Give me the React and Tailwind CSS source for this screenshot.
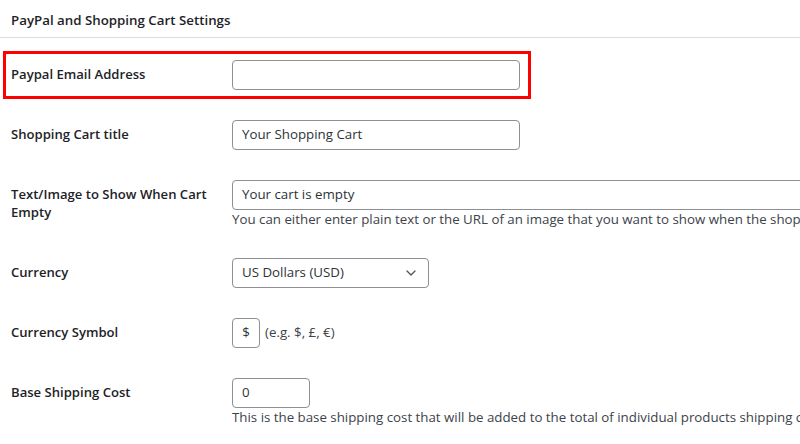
import { ChevronDown } from 'lucide-react';

const font = { fontFamily: '"Open Sans", "Noto Sans", sans-serif' };

function Label({ children }) {
  return (
    <div className="w-[212px] mr-[9px] shrink-0 pt-[5px] text-[13.1px] leading-[18px] font-semibold text-[#1d2327]">
      {children}
    </div>
  );
}

function TextInput({ value = '', className = '' }) {
  return (
    <div
      className={`h-[30px] flex items-center px-[9px] border border-[#8c8f94] rounded-[4px] bg-white text-[13.3px] text-[#2c3338] shrink-0 ${className}`}
    >
      {value}
    </div>
  );
}

function Help({ children }) {
  return (
    <div className="text-[13.3px] leading-[18px] text-[#3c434a] whitespace-nowrap">{children}</div>
  );
}

export default function App() {
  return (
    <div className="w-[800px] h-[444px] overflow-hidden bg-white" style={font}>
      <div className="h-[38px] border-b border-[#dcdcde] pl-[11px] pt-[10px] text-[13.3px] leading-[20px] font-semibold text-[#1d2327]">
        PayPal and Shopping Cart Settings
      </div>

      <div className="flex flex-col gap-[30px] pl-[11px] pt-[13px]">
        <div className="-ml-[8px] w-[528px] h-[48px] border-[3px] border-[#ff0000] flex items-center pl-[5px]">
          <div className="flex items-start">
            <Label>Paypal Email Address</Label>
            <TextInput className="w-[288px]" />
          </div>
        </div>

        <div className="flex items-start -mt-[9px]">
          <Label>Shopping Cart title</Label>
          <TextInput value="Your Shopping Cart" className="w-[288px]" />
        </div>

        <div className="flex items-start">
          <Label>Text/Image to Show When Cart Empty</Label>
          <div className="flex flex-col">
            <TextInput value="Your cart is empty" className="w-[620px]" />
            <Help>
              You can either enter plain text or the URL of an image that you want to show when the shopping cart is empty
            </Help>
          </div>
        </div>

        <div className="flex items-start">
          <Label>Currency</Label>
          <div className="w-[197px] h-[30px] flex items-center justify-between pl-[9px] pr-[9px] border border-[#8c8f94] rounded-[4px] text-[13.3px] text-[#2c3338]">
            <span>US Dollars (USD)</span>
            <ChevronDown size={16} strokeWidth={2} className="text-[#50575e]" />
          </div>
        </div>

        <div className="flex items-start">
          <Label>Currency Symbol</Label>
          <div className="flex items-center">
            <TextInput value="$" className="w-[28px] justify-center px-0" />
            <span className="ml-[5px] text-[13.3px] text-[#3c434a]">(e.g. $, £, €)</span>
          </div>
        </div>

        <div className="flex items-start">
          <Label>Base Shipping Cost</Label>
          <div className="flex flex-col">
            <TextInput value="0" className="w-[78px]" />
            <Help>
              This is the base shipping cost that will be added to the total of individual products shipping cost
            </Help>
          </div>
        </div>
      </div>
    </div>
  );
}
